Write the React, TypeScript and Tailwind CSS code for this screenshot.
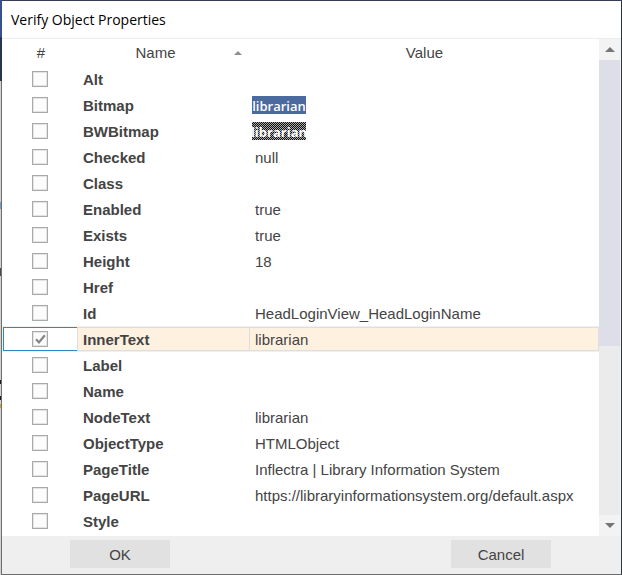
import { useState } from "react";

type Property = {
  name: string;
  value?: string;
  picture?: "color" | "mono";
};

const PROPERTIES: Property[] = [
  { name: "Alt" },
  { name: "Bitmap", value: "librarian", picture: "color" },
  { name: "BWBitmap", value: "librarian", picture: "mono" },
  { name: "Checked", value: "null" },
  { name: "Class" },
  { name: "Enabled", value: "true" },
  { name: "Exists", value: "true" },
  { name: "Height", value: "18" },
  { name: "Href" },
  { name: "Id", value: "HeadLoginView_HeadLoginName" },
  { name: "InnerText", value: "librarian" },
  { name: "Label" },
  { name: "Name" },
  { name: "NodeText", value: "librarian" },
  { name: "ObjectType", value: "HTMLObject" },
  { name: "PageTitle", value: "Inflectra | Library Information System" },
  { name: "PageURL", value: "https://libraryinformationsystem.org/default.aspx" },
  { name: "Style" },
];

// Sliver of the application window that shows behind the dialog.
function Backdrop() {
  return (
    <div className="flex w-[2px] shrink-0 flex-col border-r border-[#6f6f6f] bg-[#d2d2d2]">
      <div className="-mr-px h-[37px] shrink-0 bg-[#37518f]" />
      <div className="-mr-px h-11 shrink-0 bg-[#26364f]" />
      <div className="mt-[121px] h-[7px] shrink-0 bg-[#6d9fd0]" />
      <div className="mt-[59px] h-2 shrink-0 bg-[#4a4d52]" />
      <div className="mt-[104px] h-1 shrink-0 bg-[#1c1c1c]" />
      <div className="mt-3 h-1 shrink-0 bg-[#1c1c1c]" />
      <div className="mt-1 h-1 shrink-0 bg-[#d3a21c]" />
    </div>
  );
}

function PropertyValue({ property }: { property: Property }) {
  if (property.picture === "color") {
    return (
      <span className="-ml-[3px] flex h-[18px] w-[54px] items-center justify-center bg-[#4b6b9f] pt-0.5 font-['Open_Sans','Noto_Sans',sans-serif] text-[13px] font-semibold text-white">
        {property.value}
      </span>
    );
  }
  if (property.picture === "mono") {
    return (
      <span className="-ml-[3px] flex h-[18px] w-[54px] items-center justify-center bg-[repeating-conic-gradient(#101010_0_25%,#a8a8a8_0_50%)] bg-[length:2px_2px] pt-0.5 font-['Open_Sans','Noto_Sans',sans-serif] text-[13px] font-bold text-white">
        {property.value}
      </span>
    );
  }
  return <span className="pt-0.5">{property.value}</span>;
}

function PropertyRow({
  property,
  checked,
  selected,
  onToggle,
}: {
  property: Property;
  checked: boolean;
  selected: boolean;
  onToggle: () => void;
}) {
  const id = `property-${property.name}`;
  const cell = selected
    ? "border-y border-r border-[#dedede] bg-[#fff1e0]"
    : "border-y border-r border-transparent";
  return (
    <tr className={selected ? "bg-[#f0f0f0]" : ""}>
      <td className="h-[26px] py-px pl-px">
        <div
          className={`flex h-6 items-center border-y border-l pl-7 ${
            selected ? "border-[#2f87c8] bg-white" : "border-transparent"
          }`}
        >
          <span className="grid size-4">
            <input
              id={id}
              type="checkbox"
              checked={checked}
              onChange={onToggle}
              className="col-start-1 row-start-1 size-4 appearance-none border border-[#a9abab] bg-[#fcfcfc] shadow-[inset_0_0_0_1px_#e4e4e4]"
            />
            {checked && (
              <svg
                viewBox="0 0 16 16"
                className="pointer-events-none col-start-1 row-start-1 size-4"
                fill="none"
                stroke="#858585"
                strokeWidth="2.2"
                aria-hidden="true"
              >
                <path d="M4 8.2 L7 11.4 L12.8 4.2" />
              </svg>
            )}
          </span>
        </div>
      </td>
      <th scope="row" className="h-[26px] py-px text-left font-bold">
        <div className={`flex h-6 items-center border-l pl-[5px] ${cell}`}>
          <label htmlFor={id} className="pt-0.5">
            {property.name}
          </label>
        </div>
      </th>
      <td className="h-[26px] py-px">
        <div className={`flex h-6 items-center whitespace-nowrap pl-[5px] ${cell}`}>
          <PropertyValue property={property} />
        </div>
      </td>
    </tr>
  );
}

function ScrollBar() {
  return (
    <div className="flex w-[22px] shrink-0 flex-col border-r border-[#f5f5f5] bg-[#ebebeb]">
      <button type="button" aria-label="Scroll up" className="flex h-[21px] shrink-0 items-center justify-center bg-[#f3f3f3]">
        <svg viewBox="0 0 10 5" className="h-[5px] w-[10px]" fill="#757575" aria-hidden="true">
          <path d="M0 5 L5 0 L10 5 Z" />
        </svg>
      </button>
      <div className="flex-1">
        <div className="h-[62.8%] bg-[#dedee8]" />
      </div>
      <button type="button" aria-label="Scroll down" className="flex h-[21px] shrink-0 items-center justify-center bg-[#f3f3f3]">
        <svg viewBox="0 0 10 5" className="h-[5px] w-[10px]" fill="#757575" aria-hidden="true">
          <path d="M0 0 L5 5 L10 0 Z" />
        </svg>
      </button>
    </div>
  );
}

export default function App() {
  const [checked, setChecked] = useState<string[]>(["InnerText"]);
  const [selected, setSelected] = useState("InnerText");

  const toggle = (name: string) => {
    setSelected(name);
    setChecked((list) =>
      list.includes(name) ? list.filter((n) => n !== name) : [...list, name]
    );
  };

  return (
    <div className="flex h-screen font-['Liberation_Sans',Arial,sans-serif] text-[15px] leading-[18px] text-[#444444]">
      <Backdrop />
      <main className="flex min-w-0 flex-1 flex-col border-y border-r border-t-[#343f56] border-r-[#2f333b] border-b-[#6c6c6c] bg-white">
        <header className="flex h-[38px] shrink-0 items-center border-b border-[#ededed] px-[9px]">
          <h1 className="font-['Open_Sans','Noto_Sans',sans-serif] text-[14px] text-black">
            Verify Object Properties
          </h1>
        </header>
        <div className="flex min-h-0 flex-1">
          <div className="min-w-0 flex-1 overflow-hidden">
            <table className="w-full table-fixed border-collapse">
              <colgroup>
                <col className="w-[75px]" />
                <col className="w-[173px]" />
                <col />
              </colgroup>
              <thead>
                <tr className="h-[27px]">
                  <th scope="col" className="font-normal">
                    <span className="pl-[3px]">#</span>
                  </th>
                  <th scope="col" aria-sort="ascending" className="font-normal">
                    <div className="flex items-center pr-2">
                      <span className="flex-1">Name</span>
                      <svg viewBox="0 0 8 4" className="h-1 w-2" fill="#8f8f8f" aria-hidden="true">
                        <path d="M0 4 L4 0 L8 4 Z" />
                      </svg>
                    </div>
                  </th>
                  <th scope="col" className="font-normal">
                    Value
                  </th>
                </tr>
              </thead>
              <tbody>
                {PROPERTIES.map((property) => (
                  <PropertyRow
                    key={property.name}
                    property={property}
                    checked={checked.includes(property.name)}
                    selected={selected === property.name}
                    onToggle={() => toggle(property.name)}
                  />
                ))}
              </tbody>
            </table>
          </div>
          <ScrollBar />
        </div>
        <footer className="flex h-[38px] shrink-0 justify-between bg-[#efefef] pt-1 pr-[70px] pl-[68px]">
          <button type="button" className="h-7 w-[100px] bg-[#e1e1e1] pt-0.5">
            OK
          </button>
          <button type="button" className="h-7 w-[100px] bg-[#e1e1e1] pt-0.5">
            Cancel
          </button>
        </footer>
      </main>
    </div>
  );
}
